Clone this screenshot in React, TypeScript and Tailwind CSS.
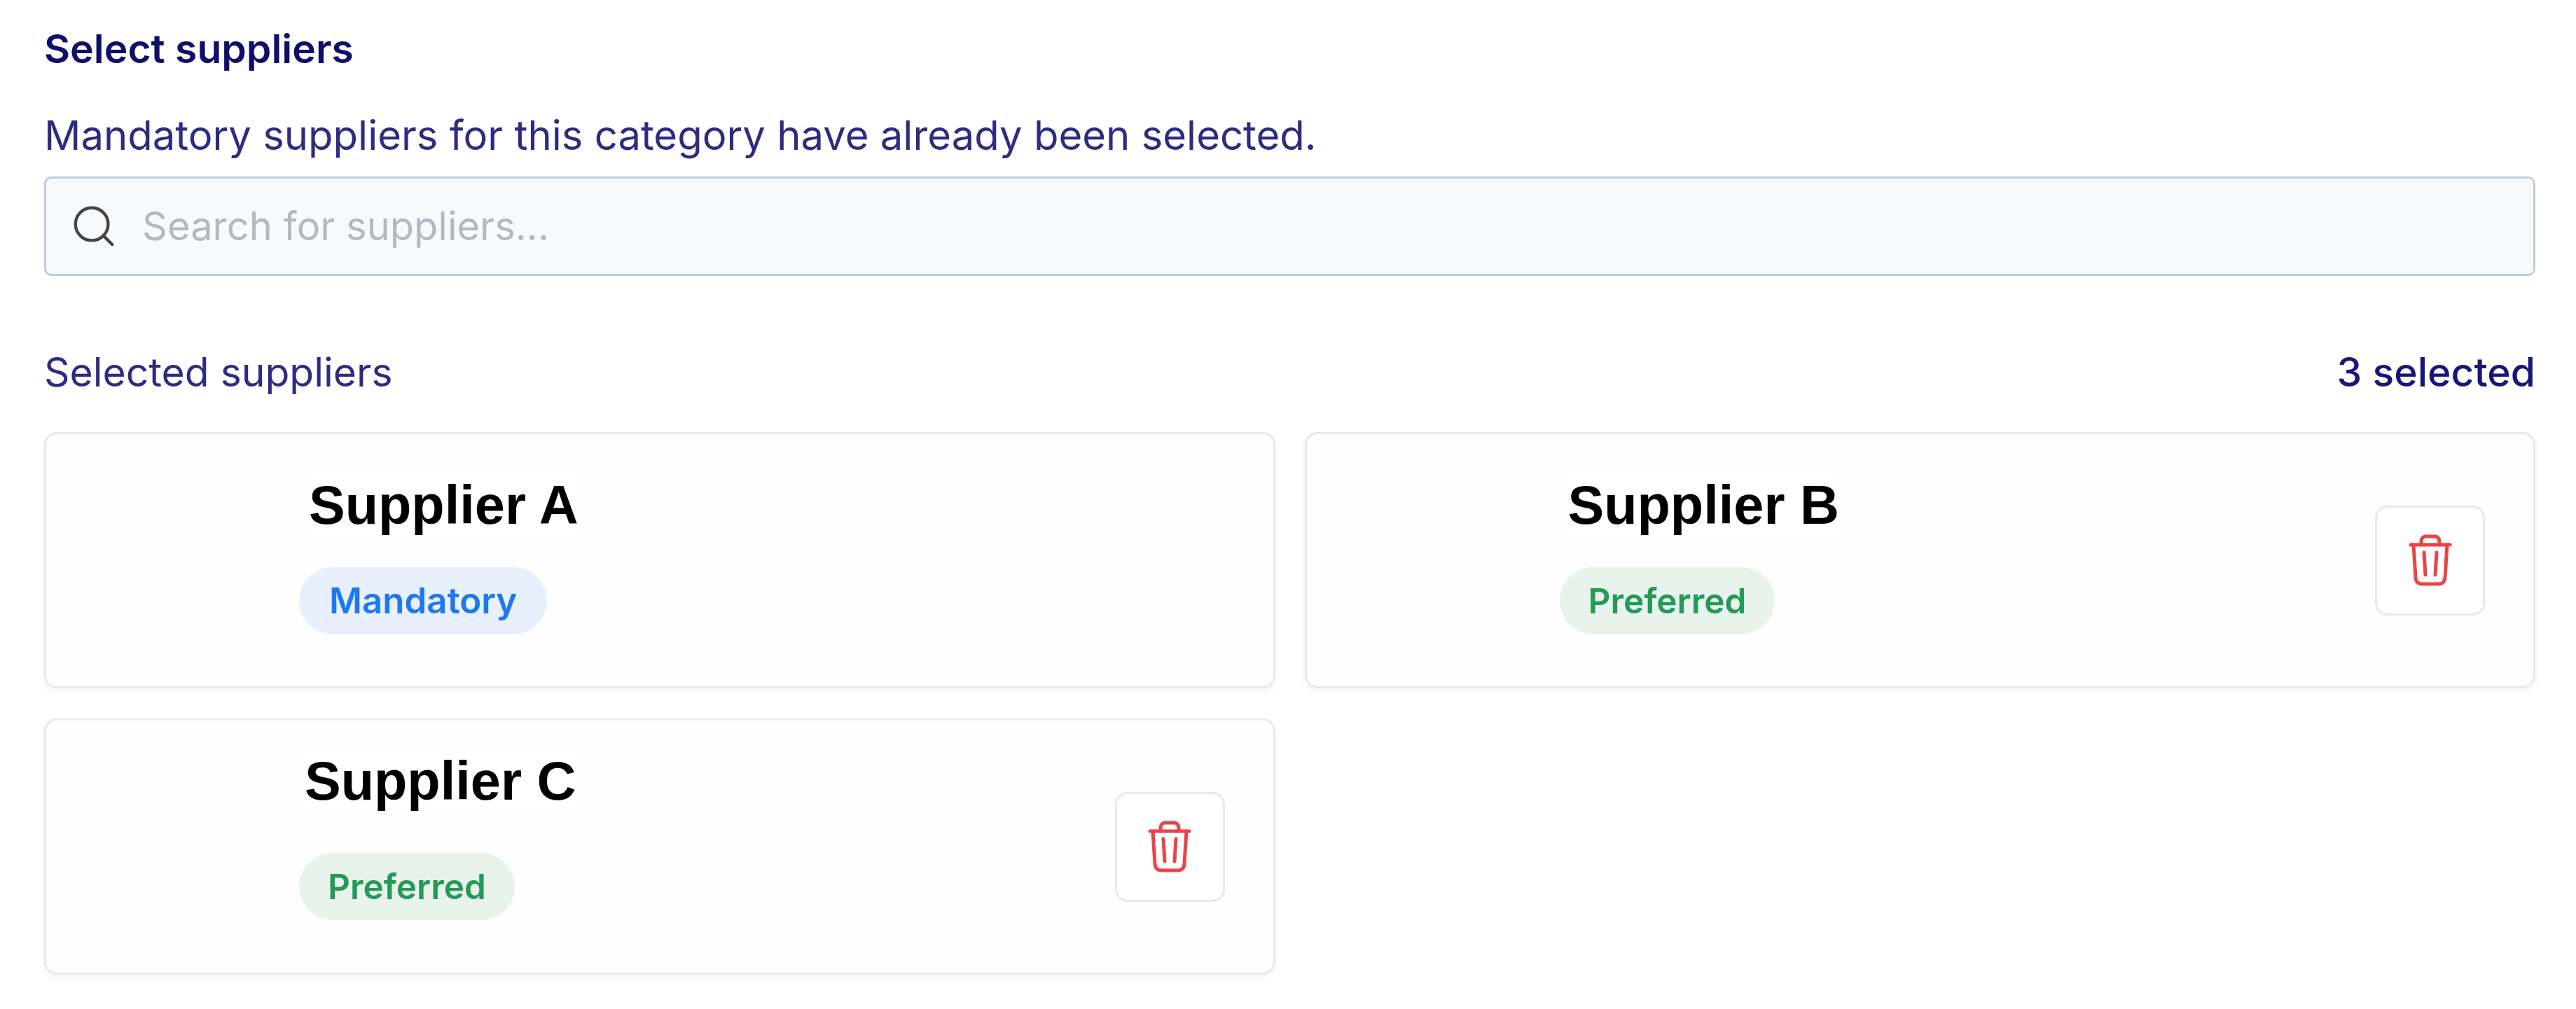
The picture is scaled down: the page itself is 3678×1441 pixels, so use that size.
import { Search } from "lucide-react";

function Trash() {
  return (
    <button className="w-[157px] h-[157px] shrink-0 rounded-[18px] border-[3px] border-[#e8e9f0] bg-white flex items-center justify-center">
      <svg width="62" height="74" viewBox="0 0 62 74" fill="none" stroke="#ec4348" strokeWidth="5" strokeLinecap="round" strokeLinejoin="round">
        <path d="M3 15H59" />
        <path d="M7 15L10 62C10.5 68 14 71 19 71H43C48 71 51.5 68 52 62L55 15" />
        <path d="M18 15V11C18 6 20.5 3 25 3H37C41.5 3 44 6 44 11V15" />
        <path d="M22 26L24 58" />
        <path d="M40 26L38 58" />
      </svg>
    </button>
  );
}

function Card({ name, badge, badgeClass, trash, nameClass }: { name: string; badge: string; badgeClass: string; trash?: boolean; nameClass: string }) {
  return (
    <div className="h-[366px] rounded-[18px] border-[3px] border-[#e8e9f0] bg-[#fefefe] shadow-[0_4px_8px_rgba(30,30,80,0.05)] pl-[49px] pr-[69px] flex items-center">
      <div className="w-[270px] h-[245px] -mt-[8px] shrink-0 rounded-[16px] bg-[#fdfdfd]" />
      <div className="flex-1 flex flex-col items-start pl-[42px] -mt-[18px]">
        <div className={`font-['Liberation_Sans'] font-bold text-[77.5px] leading-[90px] text-black bg-white ${nameClass}`}>{name}</div>
        <div className={`h-[96px] rounded-full flex items-center font-['Inter'] font-semibold ${badgeClass}`}>
          {badge}
        </div>
      </div>
      {trash && <Trash />}
    </div>
  );
}

const blue = "px-[43px] text-[51px] bg-[#e7f0fc] text-[#1f78ef]";
const green = "px-[41px] text-[49.5px] bg-[#e8f3ec] text-[#239a56]";

export default function App() {
  return (
    <div className="w-[3678px] h-[1441px] bg-white pl-[63px] pr-[58px] pt-[36px] font-['Inter'] flex flex-col">
      <div className="h-[68px] flex items-center text-[57px] font-semibold text-[#0f0f6b]">Select suppliers</div>
      <div className="mt-[53px] h-[72px] flex items-center text-[58px] text-[#2c2c80]">Mandatory suppliers for this category have already been selected.</div>
      <div className="mt-[23px] h-[142px] rounded-[10px] border-[3px] border-[#bccde2] bg-[#f8f9fb] flex items-center pl-[33px] gap-[34px]">
        <Search size={70} strokeWidth={1.5} color="#444444" />
        <span className="text-[56px] text-[#b4b9c0]">Search for suppliers...</span>
      </div>
      <div className="mt-[102px] h-[72px] flex items-center justify-between text-[57px] text-[#2c2c80]">
        <span>Selected suppliers</span>
        <span className="text-[#17177a] font-medium">3 selected</span>
      </div>
      <div className="mt-[49px] grid grid-cols-2 gap-x-[42px] gap-y-[43px]">
        <Card name="Supplier A" badge="Mandatory" badgeClass={`mt-[44px] ${blue}`} nameClass="ml-[14px]" />
        <Card name="Supplier B" badge="Preferred" badgeClass={`mt-[44px] ${green}`} trash nameClass="ml-[12px]" />
        <Card name="Supplier C" badge="Preferred" badgeClass={`mt-[58px] ${green}`} trash nameClass="ml-[8px] -mt-[16px]" />
      </div>
    </div>
  );
}
